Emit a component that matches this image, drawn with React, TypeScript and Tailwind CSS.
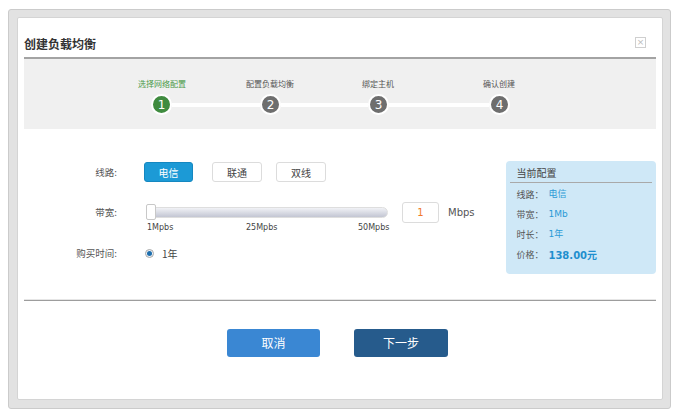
import React from 'react';

const steps = [
  { label: '选择网络配置', active: true },
  { label: '配置负载均衡', active: false },
  { label: '绑定主机', active: false },
  { label: '确认创建', active: false },
];

const summary = [
  { label: '线路：', value: '电信' },
  { label: '带宽：', value: '1Mb' },
  { label: '时长：', value: '1年' },
];

function StepCircle({ n, active }: { n: number; active: boolean }) {
  return (
    <div
      className={`w-[21px] h-[21px] shrink-0 rounded-full border-2 border-white flex items-center justify-center text-[12px] leading-none text-white ${
        active ? 'bg-[#3f8b3f]' : 'bg-[#6e6e6e]'
      }`}
    >
      {n}
    </div>
  );
}

export default function App() {
  return (
    <div className="w-[680px] h-[419px] bg-white pt-[9px] pl-[8px] font-['DejaVu_Sans','Noto_Sans_CJK_SC',sans-serif]">
      <div className="w-[663px] h-[400px] bg-[#e2e2e2] border border-[#cbcbcb] rounded-[3px] pt-[7px] pl-[8px] pr-[7px]">
        <div className="h-[383px] bg-white border border-[#d4d4d4] rounded-[2px] px-[6px]">
          {/* header */}
          <div className="h-[41px] flex items-start justify-between pt-[18px] border-b-2 border-[#a3a3a3]">
            <h1 className="text-[12px] leading-[16px] font-bold text-[#333] font-['Noto_Sans_CJK_SC',sans-serif]">
              创建负载均衡
            </h1>
            <div className="mr-[10px] mt-[1px] w-[11px] h-[11px] border border-[#cfcfcf] flex items-center justify-center text-[9px] leading-none text-[#bbb]">
              ×
            </div>
          </div>

          {/* steps */}
          <div className="h-[70px] bg-[#f0f0f0] pt-[19px]">
            <div className="flex h-[12px] items-center text-[8px] leading-none text-[#555] font-['Noto_Sans_CJK_SC',sans-serif]">
              <div className="ml-[88px] w-[100px] text-center text-[#4b9a4b]">{steps[0].label}</div>
              <div className="ml-[8px] w-[100px] text-center">{steps[1].label}</div>
              <div className="ml-[8px] w-[100px] text-center">{steps[2].label}</div>
              <div className="ml-[21px] w-[100px] text-center">{steps[3].label}</div>
            </div>
            <div className="flex items-center mt-[4px] ml-[127px]">
              <StepCircle n={1} active />
              <div className="w-[88px] h-[4px] bg-white" />
              <StepCircle n={2} active={false} />
              <div className="w-[87px] h-[4px] bg-white" />
              <StepCircle n={3} active={false} />
              <div className="w-[100px] h-[4px] bg-white" />
              <StepCircle n={4} active={false} />
            </div>
          </div>

          {/* form */}
          <div className="h-[170px] flex">
            <div className="w-[484px] pt-[33px]">
              <div className="flex items-center h-[20px]">
                <div className="w-[93px] text-right text-[9.5px] text-[#555] font-['Noto_Sans_CJK_SC',sans-serif]">线路:</div>
                <button className="ml-[27px] w-[49px] h-[20px] rounded-[3px] bg-[#1c9ad6] border border-[#1587c0] text-white text-[10px] font-['Noto_Sans_CJK_SC',sans-serif]">
                  电信
                </button>
                <button className="ml-[19px] w-[50px] h-[20px] rounded-[3px] bg-white border border-[#dcdcdc] text-[#444] text-[10px] font-['Noto_Sans_CJK_SC',sans-serif]">
                  联通
                </button>
                <button className="ml-[14px] w-[50px] h-[20px] rounded-[3px] bg-white border border-[#dcdcdc] text-[#444] text-[10px] font-['Noto_Sans_CJK_SC',sans-serif]">
                  双线
                </button>
              </div>

              <div className="flex items-center h-[21px] mt-[20px]">
                <div className="w-[93px] text-right text-[9.5px] text-[#555] font-['Noto_Sans_CJK_SC',sans-serif]">带宽:</div>
                <div className="relative ml-[29px] w-[242px] h-[11px] rounded-full border border-[#dedede] bg-gradient-to-b from-[#f1f2f6] to-[#c3c6d3]">
                  <div className="absolute left-[-1px] top-[-4px] w-[10px] h-[16px] rounded-[2px] bg-white border border-[#c8c8c8]" />
                </div>
                <div className="ml-[14px] w-[37px] h-[21px] rounded-[3px] border border-[#dcdcdc] flex items-center justify-center text-[10px] text-[#f07a28]">
                  1
                </div>
                <span className="ml-[9px] text-[10px] text-[#555]">Mbps</span>
              </div>

              <div className="flex items-center h-[10px] text-[8px] leading-none text-[#444]">
                <span className="ml-[123px] w-[99px]">1Mpbs</span>
                <span className="w-[112px]">25Mpbs</span>
                <span>50Mpbs</span>
              </div>

              <div className="flex items-center h-[16px] mt-[12px]">
                <div className="w-[93px] text-right text-[9.5px] text-[#555] font-['Noto_Sans_CJK_SC',sans-serif]">购买时间:</div>
                <span className="ml-[28px] w-[9px] h-[9px] rounded-full border border-[#a8a8a8] bg-[#eef1f5] flex items-center justify-center">
                  <span className="w-[5px] h-[5px] rounded-full bg-[#1d6ead]" />
                </span>
                <span className="ml-[8px] text-[10px] text-[#444] font-['Noto_Sans_CJK_SC',sans-serif]">1年</span>
              </div>
            </div>

            <div className="mt-[32px] w-[150px] h-[113px] rounded-[4px] bg-[#cfe8f7] px-[4px] pt-[5px] font-['Noto_Sans_CJK_SC',sans-serif]">
              <div className="h-[17px] pl-[6px] text-[10px] leading-[14px] text-[#444] border-b border-[#a9a9a9]">当前配置</div>
              <div className="pl-[6px] pt-[2px]">
                {summary.map((row) => (
                  <div key={row.label} className="flex items-center h-[20px] text-[9px]">
                    <span className="w-[32px] text-[#555]">{row.label}</span>
                    <span className="text-[#2b9ad6] font-['DejaVu_Sans','Noto_Sans_CJK_SC',sans-serif]">{row.value}</span>
                  </div>
                ))}
                <div className="flex items-center h-[20px] text-[9px]">
                  <span className="w-[32px] text-[#555]">价格：</span>
                  <span className="text-[10px] font-bold text-[#1f8fce] font-['DejaVu_Sans','Noto_Sans_CJK_SC',sans-serif]">138.00元</span>
                </div>
              </div>
            </div>
          </div>

          {/* divider */}
          <div className="h-[2px] border-t border-[#e6e6e6] bg-[#9d9d9d]" />

          {/* actions */}
          <div className="flex pt-[28px] pl-[203px] gap-[34px] font-['Noto_Sans_CJK_SC',sans-serif]">
            <button className="w-[93px] h-[28px] rounded-[3px] bg-[#3a87d3] text-white text-[12px]">取消</button>
            <button className="w-[94px] h-[28px] rounded-[3px] bg-[#265b8c] text-white text-[12px]">下一步</button>
          </div>
        </div>
      </div>
    </div>
  );
}
